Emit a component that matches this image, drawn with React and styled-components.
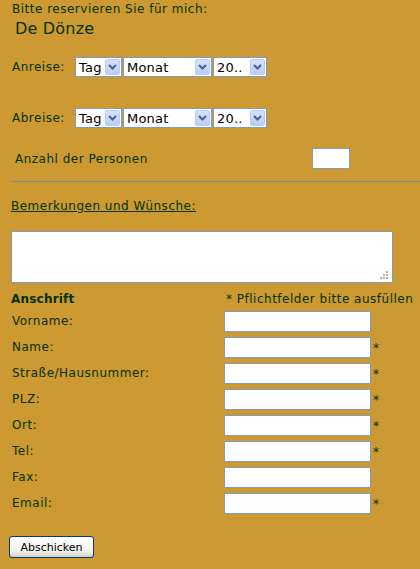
import styled, { createGlobalStyle } from "styled-components"

const GlobalStyle = createGlobalStyle`
    html, body {
        margin: 0;
        padding: 0;
        background: #CC9933;
    }
    body {
        font-family: "DejaVu Sans", Verdana, sans-serif;
        font-size: 12px;
        letter-spacing: 0.5px;
        color: #003300;
    }
`

const felder = [
    { label: "Vorname:", pflicht: false },
    { label: "Name:", pflicht: true },
    { label: "Straße/Hausnummer:", pflicht: true },
    { label: "PLZ:", pflicht: true },
    { label: "Ort:", pflicht: true },
    { label: "Tel:", pflicht: true },
    { label: "Fax:", pflicht: false },
    { label: "Email:", pflicht: true },
]

function Auswahl({ text, breite }) {
    return (
        <StyledAuswahl breite={breite}>
            <span>{text}</span>
            <Pfeil>
                <svg width="9" height="6" viewBox="0 0 9 6">
                    <path d="M1 1 L4.5 4.5 L8 1" stroke="#4D6185" strokeWidth="2" fill="none" />
                </svg>
            </Pfeil>
        </StyledAuswahl>
    )
}

function Datum({ titel }) {
    return (
        <DatumZeile>
            <Label>{titel}</Label>
            <Auswahl text="Tag" breite={47} />
            <Auswahl text="Monat" breite={89} />
            <Auswahl text="20.." breite={54} />
        </DatumZeile>
    )
}

export default function App() {
    return (
        <Seite>
            <GlobalStyle />
            <Intro>Bitte reservieren Sie für mich:</Intro>
            <Titel>De Dönze</Titel>

            <Datum titel="Anreise:" />
            <Abstand />
            <Datum titel="Abreise:" />

            <PersonenZeile>
                <span>Anzahl der Personen</span>
                <Feld breite={38} />
            </PersonenZeile>

            <Linie />

            <Verweis href="#">Bemerkungen und Wünsche:</Verweis>

            <TextBox>
                <textarea />
                <Griff>
                    <svg width="9" height="9" viewBox="0 0 9 9">
                        <rect x="6" y="0" width="2" height="2" fill="#B6B2A2" />
                        <rect x="3" y="3" width="2" height="2" fill="#B6B2A2" />
                        <rect x="6" y="3" width="2" height="2" fill="#B6B2A2" />
                        <rect x="0" y="6" width="2" height="2" fill="#B6B2A2" />
                        <rect x="3" y="6" width="2" height="2" fill="#B6B2A2" />
                        <rect x="6" y="6" width="2" height="2" fill="#B6B2A2" />
                    </svg>
                </Griff>
            </TextBox>

            <Anschrift>
                <Fett>Anschrift</Fett>
                <Hinweis>* Pflichtfelder bitte ausfüllen</Hinweis>
                {felder.map((f) => (
                    <Zeile key={f.label}>
                        <Label>{f.label}</Label>
                        <Feld breite={147} />
                        <Stern>{f.pflicht ? "*" : ""}</Stern>
                    </Zeile>
                ))}
            </Anschrift>

            <Knopf>Abschicken</Knopf>
        </Seite>
    )
}

const Seite = styled.div`
    padding: 2px 0 20px 11px;
    display: flex;
    flex-direction: column;
    align-items: flex-start;
`

const Intro = styled.div`
    line-height: 15px;
    margin-left: 1px;
`

const Titel = styled.div`
    font-size: 16px;
    line-height: 20px;
    letter-spacing: 0.2px;
    margin: 2px 0 0 4px;
`

const DatumZeile = styled.div`
    display: flex;
    align-items: center;
    gap: 1px;
    margin-top: 18px;
    padding-left: 1px;
    height: 20px;

    & > span:first-child {
        width: 62px;
    }
`

const Abstand = styled.div`
    height: 13px;
`

const Label = styled.span`
    line-height: 15px;
`

const StyledAuswahl = styled.div`
    box-sizing: border-box;
    width: ${props => props.breite}px;
    height: 20px;
    border: 1px solid #7F9DB9;
    background: #fff;
    display: flex;
    align-items: center;
    padding: 1px;
    font-family: "DejaVu Sans", Verdana, sans-serif;
    font-size: 13px;
    letter-spacing: 0.2px;
    color: #000;

    span {
        flex: 1;
        padding-left: 2px;
        overflow: hidden;
        white-space: nowrap;
    }
`

const Pfeil = styled.div`
    box-sizing: border-box;
    width: 15px;
    height: 16px;
    border: 1px solid #BACCF4;
    border-radius: 2px;
    background: linear-gradient(#D6E3FE, #B8CDF8);
    display: flex;
    align-items: center;
    justify-content: center;
`

const PersonenZeile = styled.div`
    display: flex;
    align-items: center;
    margin-top: 20px;
    height: 21px;

    span {
        width: 297px;
        padding-left: 4px;
    }
`

const Feld = styled.input`
    box-sizing: border-box;
    width: ${props => props.breite}px;
    height: 21px;
    border: 1px solid #7F9DB9;
    background: #fff;
    margin: 0;
    padding: 0 2px;
    outline: none;
`

const Linie = styled.div`
    align-self: stretch;
    border-top: 1px solid #7F8A99;
    margin-top: 12px;
`

const Verweis = styled.a`
    color: #003300;
    text-decoration: underline;
    line-height: 15px;
    margin-top: 17px;
`

const TextBox = styled.div`
    position: relative;
    margin-top: 17px;
    width: 382px;
    height: 52px;

    textarea {
        box-sizing: border-box;
        width: 100%;
        height: 100%;
        border: 1px solid #7F9DB9;
        background: #fff;
        resize: none;
        margin: 0;
        outline: none;
        display: block;
    }
`

const Griff = styled.div`
    position: absolute;
    right: 4px;
    bottom: 3px;
    line-height: 0;
`

const Anschrift = styled.div`
    display: grid;
    grid-template-columns: 213px 147px auto;
    row-gap: 5px;
    margin-top: 9px;
`

const Fett = styled.div`
    font-weight: bold;
    letter-spacing: 0.2px;
    line-height: 14px;
`

const Hinweis = styled.div`
    grid-column: 2 / 4;
    line-height: 14px;
    padding-left: 2px;
    white-space: nowrap;
`

const Zeile = styled.div`
    display: contents;

    & > span:first-child {
        align-self: center;
        padding-left: 1px;
    }
`

const Stern = styled.span`
    align-self: center;
    padding-left: 2px;
`

const Knopf = styled.button`
    margin: 22px 0 0 -2px;
    width: 85px;
    height: 22px;
    border: 1px solid #003C74;
    border-radius: 3px;
    background: linear-gradient(#FFFFFF, #F4F3EE 70%, #D6D0C5);
    font-family: "DejaVu Sans", Tahoma, sans-serif;
    font-size: 11px;
    letter-spacing: 0;
    color: #000;
    padding: 0;
`
